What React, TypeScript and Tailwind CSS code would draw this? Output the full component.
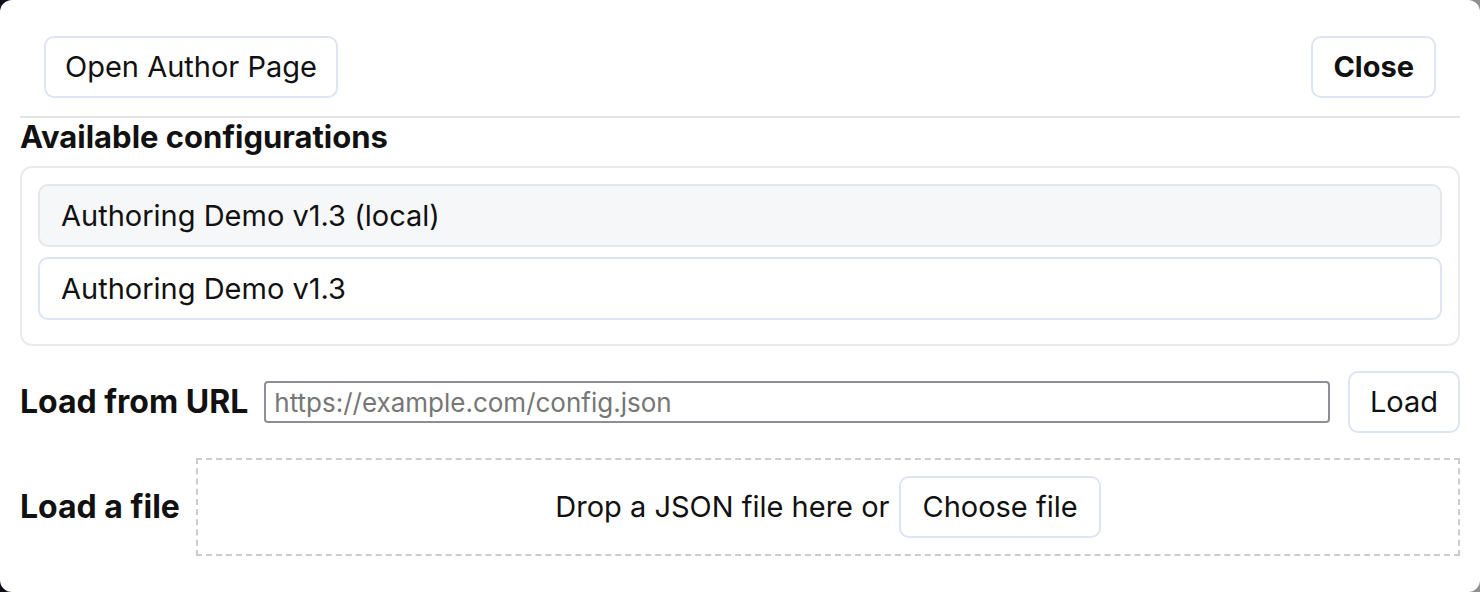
const App = () => {
  return (
    <div className="w-[1480px] h-[592px] bg-[linear-gradient(to_right,#0d1117_47%,#8f8f8f_47%)] font-['Inter',sans-serif] text-[#111]">
      <div className="h-full rounded-xl bg-white px-5">
        <div className="flex items-center justify-between border-b-2 border-[#e4e4e4] px-6 pt-9 pb-[18px]">
          <button className="h-[62px] rounded-[10px] border-2 border-[#dde5f5] bg-white px-[19px] text-[29px]">
            Open Author Page
          </button>
          <button className="h-[62px] rounded-[10px] border-2 border-[#dde5f5] bg-white px-[20px] text-[29px] font-bold">
            Close
          </button>
        </div>

        <h2 className="mb-[10px] text-[31px] font-bold leading-[38px]">Available configurations</h2>

        <div className="flex flex-col gap-[10px] rounded-xl border-2 border-[#ebebeb] px-4 pt-4 pb-6">
          <div className="flex h-[63px] items-center rounded-[10px] border-2 border-[#e6e7ea] bg-[#f6f7f9] px-[21px] text-[29px]">
            Authoring Demo v1.3 (local)
          </div>
          <div className="flex h-[63px] items-center rounded-[10px] border-2 border-[#dde5f5] bg-white px-[21px] text-[29px]">
            Authoring Demo v1.3
          </div>
        </div>

        <div className="mt-[25px] flex items-center gap-4">
          <span className="text-[32px] font-bold">Load from URL</span>
          <input
            className="h-[42px] flex-1 rounded-[4px] border-2 border-[#8e8e99] px-2 text-[26px] placeholder:text-[#767676] outline-none"
            placeholder="https://example.com/config.json"
          />
          <button className="ml-[2px] h-[62px] rounded-[10px] border-2 border-[#dde5f5] bg-white px-[20px] text-[29px]">
            Load
          </button>
        </div>

        <div className="mt-[25px] flex items-center gap-4">
          <span className="text-[32px] font-bold">Load a file</span>
          <div className="flex h-[98px] flex-1 items-center justify-center gap-[10px] border-2 border-dashed border-[#cccccc] text-[29px]">
            <span>Drop a JSON file here or</span>
            <button className="h-[62px] rounded-[10px] border-2 border-[#dde5f5] bg-white px-[21px]">
              Choose file
            </button>
          </div>
        </div>
      </div>
    </div>
  );
};

export default App;
